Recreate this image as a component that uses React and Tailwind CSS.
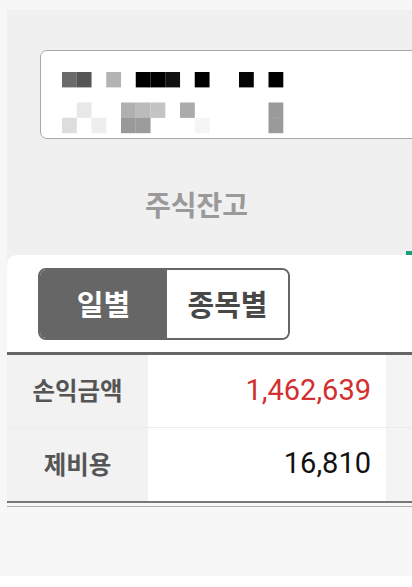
const cells = [
  [0, 0, "#6a6a6a"], [0, 1, "#555555"], [0, 3, "#b3b3b3"], [0, 5, "#000000"], [0, 6, "#000000"], [0, 7, "#111111"],
  [0, 9, "#000000"], [0, 12, "#050505"], [0, 14, "#000000"],
  [1, 1, "#e8e8e8"], [1, 4, "#b0b0b0"], [1, 5, "#bbbbbb"], [1, 6, "#c4c4c4"], [1, 8, "#ababab"], [1, 14, "#9a9a9a"],
  [2, 0, "#dddddd"], [2, 2, "#eeeeee"], [2, 4, "#999999"], [2, 5, "#9b9b9b"], [2, 9, "#f5f5f5"], [2, 14, "#9a9a9a"],
]
const rowY = [0, 30.5, 45.8]

const rows = [
  { label: "손익금액", value: "1,462,639", color: "text-[#d2302f]" },
  { label: "제비용", value: "16,810", color: "text-[#111]" },
]

export default function App() {
  return <div className="w-[412px] h-[587px] overflow-hidden bg-white">
    <div className="h-[576px] bg-[#f7f7f7] font-['Roboto','Noto_Sans_CJK_KR',sans-serif]">
      <div className="h-[10px]" />
      <div className="ml-[7px] bg-[#f0f0f0]">
        <div className="h-[40px]" />
        <div className="ml-[33px] w-[400px] h-[89px] bg-white border-[1.5px] border-[#a9a9a9] rounded-[7px] pt-[20.5px] pl-[20.5px]">
          <svg width="225" height="62" viewBox="0 0 225 62">
            {cells.map(([r, c, fill], i) => (
              <rect key={i} x={c * 14.75} y={rowY[r]} width="14.8" height="15.4" fill={fill} />
            ))}
          </svg>
        </div>
        <div className="mt-[50px] h-[30px] leading-[30px] text-center pr-[26px] text-[28px] font-bold text-[#9a9a9a] font-['Noto_Sans_CJK_KR',sans-serif]">
          주식잔고
        </div>
        <div className="h-[32px]" />
        <div className="h-[4px] flex justify-end">
          <div className="w-[6px] bg-[#1b9e7a]" />
        </div>
        <div className="bg-white rounded-tl-[10px] pt-[13px]">
          <div className="ml-[31px] w-[252px] h-[72px] border-2 border-[#666] rounded-[8px] overflow-hidden flex font-['Noto_Sans_CJK_KR',sans-serif] text-[29px] font-bold">
            <div className="w-[127px] bg-[#666] text-white flex items-center justify-center">일별</div>
            <div className="flex-1 bg-white text-[#484848] flex items-center justify-center">종목별</div>
          </div>
          <div className="h-[12px]" />
          <div className="h-[2.5px] bg-[#666]" />
          {rows.map((row, i) => (
            <div key={i} className={"flex h-[73px] " + (i === 0 ? "border-b border-[#ececec]" : "")}>
              <div className="w-[141px] bg-[#f2f2f2] flex items-center justify-center text-[24.5px] font-bold text-[#555] font-['Noto_Sans_CJK_KR',sans-serif]">
                {row.label}
              </div>
              <div className={"w-[238px] bg-white flex items-center justify-end pr-[15px] text-[29px] font-['Roboto',sans-serif] " + row.color}>
                {row.value}
              </div>
              <div className="flex-1 bg-[#f4f4f4]" />
            </div>
          ))}
          <div className="h-[2px] bg-[#777]" />
        </div>
        <div className="h-[3px] bg-[#f7f7f7]" />
        <div className="h-[1.5px] bg-[#adadad]" />
      </div>
    </div>
  </div>
}
